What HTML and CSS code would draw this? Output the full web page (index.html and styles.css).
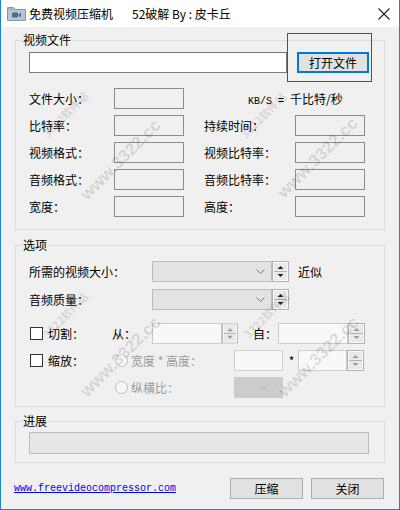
FILE: index.html
```html
<!DOCTYPE html>
<html lang="zh-CN">
<head>
    <meta charset="UTF-8">
    <title>免费视频压缩机</title>
    <link rel="stylesheet" href="styles.css">
</head>
<body>
  <svg class="defs" width="0" height="0">
    <symbol id="spin" viewBox="0 0 17 21">
      <rect x="0.5" y="0.5" width="16" height="20" fill="#e9e9e9" stroke="#b2b2b2"/>
      <rect x="1.5" y="1.5" width="14" height="18" fill="none" stroke="#fafafa"/>
      <line x1="2" y1="10.5" x2="15" y2="10.5" stroke="#b2b2b2"/>
      <path d="M5.5 8 L8.5 5 L11.5 8 Z" fill="currentColor"/>
      <path d="M5.5 13 L8.5 16 L11.5 13 Z" fill="currentColor"/>
    </symbol>
    <symbol id="chev" viewBox="0 0 9 6">
      <polyline points="0.5,0.5 4.5,4.5 8.5,0.5" fill="none" stroke="currentColor"/>
    </symbol>
  </svg>

  <div class="window">
    <div class="titlebar">
      <svg class="app-icon" width="19" height="15" viewBox="0 0 19 15">
        <path d="M0.5 1.5 H6.5 L8 3.5 H18.5 V14.5 H0.5 Z" fill="#a3b5c7" stroke="#8197ac"/>
        <rect x="1" y="4" width="17" height="10" fill="#b7c6d4"/>
        <rect x="5" y="6.5" width="6" height="5" fill="#4f6c89"/>
        <path d="M11 9 L14 6.5 V11.5 Z" fill="#4f6c89"/>
      </svg>
      <span class="title">免费视频压缩机</span>
      <span class="title crack">52破解 By : 皮卡丘</span>
      <svg class="close" width="12" height="12" viewBox="0 0 12 12">
        <path d="M0.5 0.5 L11.5 11.5 M11.5 0.5 L0.5 11.5" stroke="#222" stroke-width="1.1"/>
      </svg>
    </div>

    <div class="client">
      <fieldset class="group file-group">
        <legend>视频文件</legend>
        <div class="file-row">
          <div class="textbox file-path"></div>
          <div class="open-wrap">
            <button class="btn btn-open">打开文件</button>
          </div>
        </div>
        <div class="info-grid">
          <span>文件大小：</span><div class="readbox"></div>
          <span></span><span class="unit"><span class="mono">KB/S = </span>千比特/秒</span>
          <span>比特率：</span><div class="readbox"></div>
          <span></span><span>持续时间：</span><div class="readbox"></div>
          <span>视频格式：</span><div class="readbox"></div>
          <span></span><span>视频比特率：</span><div class="readbox"></div>
          <span>音频格式：</span><div class="readbox"></div>
          <span></span><span>音频比特率：</span><div class="readbox"></div>
          <span>宽度：</span><div class="readbox"></div>
          <span></span><span>高度：</span><div class="readbox"></div>
        </div>
      </fieldset>

      <fieldset class="group options-group">
        <legend>选项</legend>
        <div class="opt-row">
          <span class="opt-label">所需的视频大小：</span>
          <div class="combo"><svg class="chev" width="9" height="6"><use href="#chev"/></svg></div>
          <svg class="spin" width="17" height="21"><use href="#spin"/></svg>
          <span class="approx">近似</span>
        </div>
        <div class="opt-row row-b">
          <span class="opt-label">音频质量：</span>
          <div class="combo"><svg class="chev" width="9" height="6"><use href="#chev"/></svg></div>
          <svg class="spin" width="17" height="21"><use href="#spin"/></svg>
        </div>
        <div class="opt-row row-c">
          <div class="chk-cell cut"><span class="checkbox"></span><span class="chk-text">切割：</span></div>
          <span class="from">从：</span>
          <div class="textbox off w70"></div>
          <svg class="spin off" width="16" height="21"><use href="#spin"/></svg>
          <span class="to">自：</span>
          <div class="textbox off w70"></div>
          <svg class="spin off" width="17" height="21"><use href="#spin"/></svg>
        </div>
        <div class="opt-row row-d">
          <div class="chk-cell scale"><span class="checkbox"></span><span class="chk-text">缩放：</span></div>
          <span class="radio"></span>
          <span class="dim-text">宽度 * 高度：</span>
          <div class="textbox off w49"></div>
          <span class="star">*</span>
          <div class="textbox off w49"></div>
          <svg class="spin off" width="17" height="21"><use href="#spin"/></svg>
        </div>
        <div class="opt-row row-e">
          <span class="radio"></span>
          <span class="dim-text">纵横比：</span>
          <div class="combo combo-off w49"><svg class="chev" width="9" height="6"><use href="#chev"/></svg></div>
        </div>
      </fieldset>

      <fieldset class="group progress-group">
        <legend>进展</legend>
        <div class="progress"></div>
      </fieldset>

      <div class="footer">
        <a class="site-link" href="#">www.freevideocompressor.com</a>
        <button class="btn btn-foot">压缩</button>
        <button class="btn btn-foot">关闭</button>
      </div>
    </div>

    <!-- watermark of the screenshot source -->
    <span class="wm wm-small" style="left:64px; top:114px">3322软件站</span>
    <span class="wm wm-big" style="left:120px; top:160px">www.3322.cc</span>
    <span class="wm wm-small" style="left:262px; top:115px">3322软件站</span>
    <span class="wm wm-big" style="left:317px; top:158px">www.3322.cc</span>
    <span class="wm wm-small" style="left:64px; top:315px">3322软件站</span>
    <span class="wm wm-big" style="left:120px; top:357px">www.3322.cc</span>
    <span class="wm wm-small" style="left:265px; top:315px">3322软件站</span>
    <span class="wm wm-big" style="left:318px; top:357px">www.3322.cc</span>
  </div>
</body>
</html>
```

FILE: styles.css
```css
* {
  box-sizing: border-box;
}

body {
  margin: 0;
  font: 12px/16px "Noto Sans CJK SC", "Noto Sans", sans-serif;
  color: #000;
  background: #fff;
}

.defs {
  position: absolute;
}

.window {
  position: relative;
  width: 400px;
  height: 510px;
  background: #f0f0f0;
  border: 1px solid #1883d7;
  border-top: none;
  overflow: hidden;
}

.titlebar {
  height: 27px;
  background: #fff;
  display: flex;
  align-items: center;
  padding-left: 6px;
}

.app-icon {
  margin-right: 3px;
}

.crack {
  margin-left: 19px;
}

.close {
  margin-left: auto;
  margin-right: 9px;
}

.client {
  padding: 0 14px;
}

/* group boxes */
.group {
  margin: 0;
  border: 1px solid #dcdcdc;
  min-width: 0;
}

.group legend {
  padding: 0 1px;
  margin-left: -7px;
}

.file-group {
  margin-top: 5px;
  padding: 4px 13px 12px;
}

.options-group {
  margin-top: 7px;
  padding: 8px 13px 8px;
}

.progress-group {
  margin-top: 6px;
  padding: 3px 13px 8px;
}

/* controls */
.textbox {
  height: 21px;
  background: #fff;
  border: 1px solid #7a7a7a;
}

.textbox.off {
  background: #f8f8f8;
  border-color: #cccccc;
}

.w70 { width: 70px; }
.w49 { width: 49px; }

.readbox {
  height: 21px;
  border: 1px solid #8c8c8c;
  background: #f0f0f0;
}

.btn {
  font: inherit;
  color: #000;
  background: #e1e1e1;
  border: 1px solid #adadad;
  padding: 0;
  height: 21px;
}

.file-row {
  display: flex;
}

.file-path {
  width: 258px;
}

.open-wrap {
  position: relative;
  margin-left: 10px;
}

.open-wrap::after {
  content: "";
  position: absolute;
  left: -10px;
  right: -3px;
  top: -19px;
  bottom: -9px;
  border: 1px solid #e0141e;
}

.btn-open {
  width: 72px;
  border: 2px solid #0078d7;
}

.info-grid {
  margin-top: 15px;
  display: grid;
  grid-template-columns: 85px 70px 20px 91px 70px;
  grid-auto-rows: 21px;
  row-gap: 6px;
  align-items: center;
}

.unit {
  grid-column: 4 / span 2;
  padding-left: 44px;
  white-space: nowrap;
}

.mono {
  font: 10px "Liberation Mono", monospace;
  white-space: pre;
}

/* options */
.opt-row {
  display: flex;
  align-items: center;
  height: 21px;
}

.row-b { margin-top: 7px; }
.row-c { margin-top: 13px; }
.row-d { margin-top: 6px; }
.row-e { margin-top: 6px; padding-left: 86px; }

.opt-label {
  width: 123px;
}

.combo {
  width: 120px;
  height: 21px;
  background: #e3e3e3;
  border: 1px solid #bcbcbc;
  display: flex;
  align-items: center;
  justify-content: flex-end;
  padding-right: 6px;
  color: #7a7a7a;
}

.combo-off {
  background: #cccccc;
  border-color: #cccccc;
  color: #b0b0b0;
}

.combo-off.w49 {
  width: 49px;
  padding-right: 14px;
}

.spin {
  color: #222;
  flex: none;
}

.spin.off {
  color: #9a9a9a;
}

.approx {
  margin-left: 9px;
}

.chk-cell {
  display: flex;
  align-items: center;
  padding-left: 1px;
}

.chk-cell.cut { width: 83px; }
.chk-cell.scale { width: 86px; }

.checkbox {
  width: 13px;
  height: 13px;
  border: 1px solid #333;
  background: #fff;
}

.chk-text {
  margin-left: 5px;
}

.from {
  width: 40px;
}

.to {
  width: 40px;
  padding-left: 15px;
}

.radio {
  width: 13px;
  height: 13px;
  border: 1px solid #bcbcbc;
  border-radius: 50%;
  background: #f7f7f7;
  flex: none;
}

.dim-text {
  width: 106px;
  padding-left: 3px;
  color: #9a9a9a;
}

.star {
  width: 15px;
  text-align: center;
  padding-left: 2px;
}

.progress {
  width: 340px;
  height: 22px;
  background: #e6e6e6;
  border: 1px solid #bcbcbc;
}

/* footer */
.footer {
  margin-top: 15px;
  display: flex;
  align-items: center;
  padding-right: 1px;
}

.site-link {
  font: 10px/12px "Liberation Mono", monospace;
  color: #0000ff;
  margin-left: -1px;
}

.btn-foot {
  width: 73px;
  margin-left: 8px;
}

.site-link + .btn-foot {
  margin-left: auto;
}

/* watermark */
.wm {
  position: absolute;
  transform: translate(-50%, -50%) rotate(-45deg);
  color: rgba(0, 0, 0, 0.13);
  font-weight: bold;
  white-space: nowrap;
  pointer-events: none;
}

.wm-big {
  font: bold 17px/20px "Liberation Sans", sans-serif;
}

.wm-small {
  font-size: 11px;
}
```
